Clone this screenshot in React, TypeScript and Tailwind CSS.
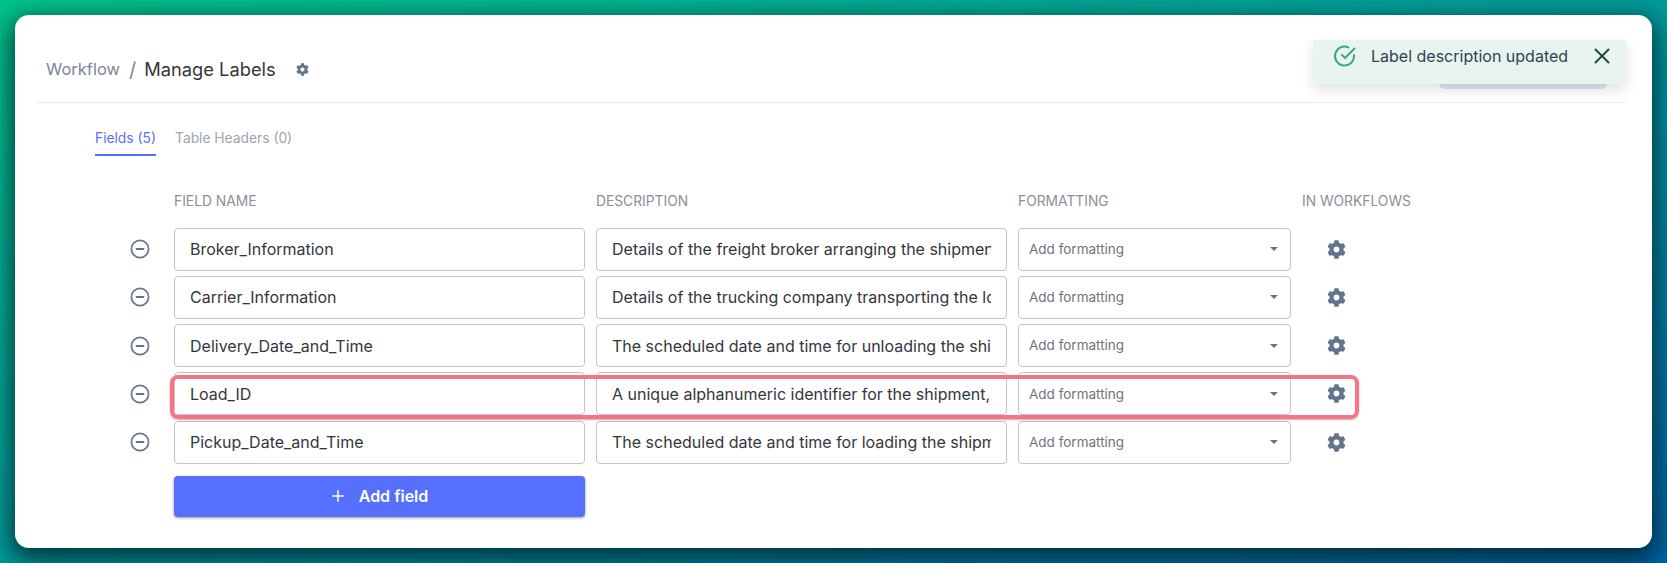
import { Plus, X } from 'lucide-react';
import { FaCog } from 'react-icons/fa';

const rows = [
  { name: 'Broker_Information', desc: 'Details of the freight broker arranging the shipment for the customer' },
  { name: 'Carrier_Information', desc: 'Details of the trucking company transporting the load to destination' },
  { name: 'Delivery_Date_and_Time', desc: 'The scheduled date and time for unloading the shipment at the consignee' },
  { name: 'Load_ID', desc: 'A unique alphanumeric identifier for the shipment, used for tracking' },
  { name: 'Pickup_Date_and_Time', desc: 'The scheduled date and time for loading the shipment at the shipper' },
];

function MinusCircle() {
  return (
    <svg width="20" height="20" viewBox="0 0 20 20" fill="none" stroke="#64748b" strokeWidth="1.7">
      <circle cx="10" cy="10" r="8.6" />
      <path d="M5.8 10h8.4" strokeWidth="2" />
    </svg>
  );
}

function CheckCircle() {
  return (
    <svg width="24" height="24" viewBox="0 0 24 24" fill="none" stroke="#3fa886" strokeWidth="2" strokeLinecap="round" strokeLinejoin="round">
      <path d="M21 11v1a9.5 9.5 0 1 1-5.6-8.6" />
      <path d="M21.5 4.5 12 14l-3-3" />
    </svg>
  );
}

export default function App() {
  return (
    <div
      className="h-[563px] w-[1667px] overflow-hidden bg-linear-to-br from-[#00c389] via-[#009a9a] to-[#0062a3] p-[15px]"
      style={{ fontFamily: 'Inter, "Noto Sans", sans-serif' }}
    >
      <div className="relative h-[533px] rounded-[14px] bg-white px-[21px] shadow-[0_8px_24px_4px_rgba(0,30,40,0.8)]">
        {/* header */}
        <div className="flex h-[88px] w-[1590px] items-center border-b border-[#e9e9e9] pt-[22px] pl-[10px]">
          <span className="text-[16.5px] text-[#7c8698]">Workflow</span>
          <span className="ml-[9px] text-[20px] text-[#7c8698]">/</span>
          <span className="ml-[8px] text-[18.3px] text-[#33363d]">Manage Labels</span>
          <FaCog size={13} color="#64748b" className="ml-[20px]" />
        </div>

        {/* tabs */}
        <div className="mt-[25px] flex gap-[19px] pl-[59px] text-[13.8px]">
          <div className="h-[28px] w-[61px] border-b-2 border-[#5570ff] text-[#5a6ff5]">Fields (5)</div>
          <div className="text-[#9ca3af]">Table Headers (0)</div>
        </div>

        {/* columns */}
        <div className="mt-[35px] flex text-[13.8px] leading-[20px] text-[#8c8f96]">
          <div className="ml-[138px] w-[422px]">FIELD NAME</div>
          <div className="w-[422px]">DESCRIPTION</div>
          <div className="w-[284px]">FORMATTING</div>
          <div>IN WORKFLOWS</div>
        </div>

        <div className="mt-[16.5px] flex flex-col gap-[5.25px]">
          {rows.map((row) => (
            <div key={row.name} className="flex h-[43px] items-center">
              <div className="flex w-[138px] justify-start pl-[94px]"><MinusCircle /></div>
              <input
                readOnly
                value={row.name}
                className="h-full w-[411px] rounded-[4px] border border-[#c4c4c4] px-[15px] text-[16px] text-[#33363d] outline-none"
              />
              <input
                readOnly
                value={row.desc}
                className="ml-[11px] h-full w-[411px] rounded-[4px] border border-[#c4c4c4] px-[15px] text-[16px] text-[#33363d] outline-none"
              />
              <div className="ml-[11px] flex h-full w-[273px] items-center justify-between rounded-[4px] border border-[#c4c4c4] pr-[12px] pl-[10px] text-[13.5px] text-[#6f747c]">
                Add formatting
                <span className="h-0 w-0 border-x-[4px] border-t-[4px] border-x-transparent border-t-[#6b7280]" />
              </div>
              <FaCog size={19} color="#64748b" className="ml-[36px]" />
            </div>
          ))}
        </div>

        <div className="mt-[12px] ml-[138px] flex h-[41px] w-[411px] items-center justify-center gap-[12px] rounded-[4px] bg-[#556ffe] pr-[2px] text-[16px] font-semibold text-white shadow-[0_1px_3px_rgba(0,0,0,0.4)]">
          <Plus size={18} strokeWidth={2} />
          Add field
        </div>

        {/* red highlight over the Load_ID row */}
        <div className="absolute top-[360px] left-[155px] h-[44px] w-[1189px] rounded-[8px] border-[4px] border-[#f87385] shadow-[0_1px_2px_rgba(0,0,0,0.3)]" />

        {/* lavender button behind the toast */}
        <div className="absolute top-[50px] left-[1424px] h-[24px] w-[168px] rounded-b-[6px] bg-[#e0e1f3]" />

        {/* toast */}
        <div className="absolute top-[25px] left-[1298px] flex h-[44px] w-[313px] items-start rounded-b-[6px] bg-[#e8f4f0] pt-[4px] pr-[11px] pl-[20px] text-[16px] leading-[24px] text-[#2e4450] shadow-[0_6px_14px_rgba(0,0,0,0.12)]">
          <CheckCircle />
          <span className="ml-[14px] flex-1">Label description updated</span>
          <X size={26} strokeWidth={1.8} className="-mt-[1px] text-[#1f4a3f]" />
        </div>
      </div>
    </div>
  );
}
